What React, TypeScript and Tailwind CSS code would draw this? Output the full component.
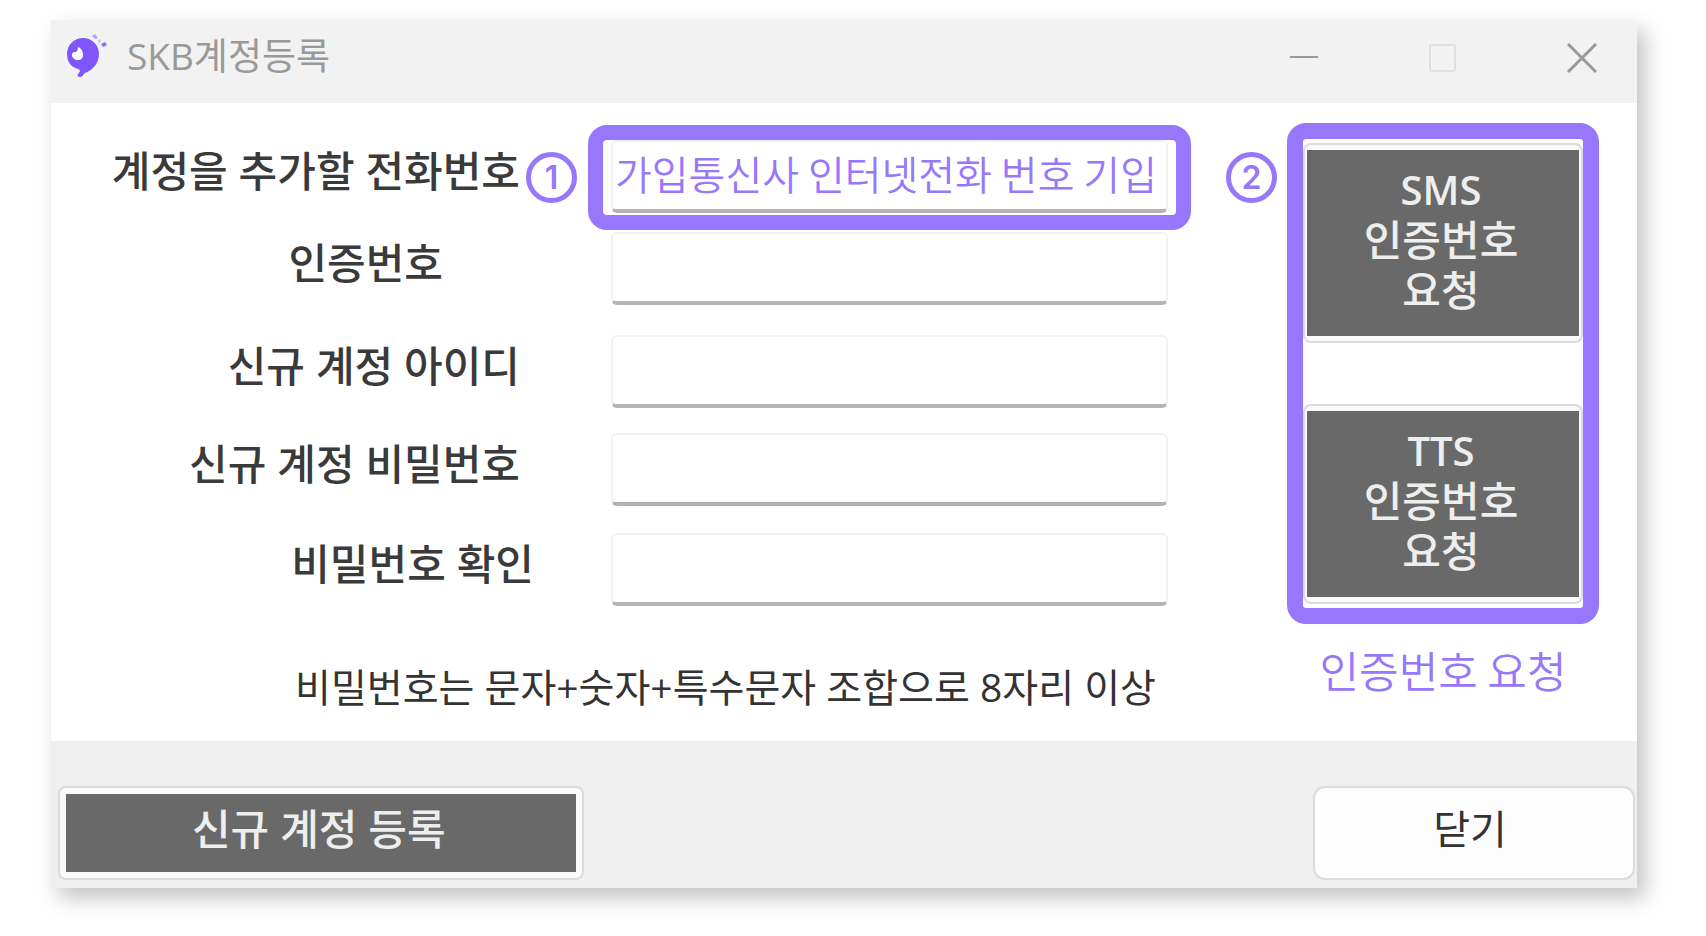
import type { ReactNode } from 'react';

const fields = [
  { id: 'phone', label: '계정을 추가할 전화번호', type: 'tel', row: '', labelPad: 'pr-[91px]' },
  { id: 'code', label: '인증번호', type: 'text', row: 'mt-[19px]', labelPad: 'pr-[168px]' },
  { id: 'account', label: '신규 계정 아이디', type: 'text', row: 'mt-[30px]', labelPad: 'pr-[91px]' },
  { id: 'password', label: '신규 계정 비밀번호', type: 'password', row: 'mt-[25px]', labelPad: 'pr-[91px]' },
  { id: 'confirm', label: '비밀번호 확인', type: 'password', row: 'mt-[27px]', labelPad: 'pr-[77px]' },
];

const Logo = () => (
  <svg viewBox="0 0 40 44" className="mb-3 h-11 w-10" aria-hidden="true">
    <path
      d="M16 4C7 4 0 11 0 20c0 8 4 13 11 15 2 1 3 2 0 5-1 1 0 3 2 3 3 0 3-3 5-4 8-3 14-10 14-19C32 11 25 4 16 4z"
      fill="#7f56fb"
    />
    <path d="M11 13c3 1 5 4 5 8 0 3-2 5-5 5s-6-2-6-5c0-2 1-3 3-3 2 0 3-2 3-5z" fill="#fff" />
    <path d="M25 2l3-2 3 4-3 1z" fill="#b9a4fb" />
    <path d="M31 6l3-1-1 4-2 0z" fill="#cfc2fb" />
    <path d="M34 10l4-2 2 3-4 2z" fill="#8f6cfb" />
  </svg>
);

const StepBadge = ({ children }: { children: ReactNode }) => (
  <span className="flex h-[51px] w-[51px] shrink-0 items-center justify-center rounded-full border-5 border-[#9777fb] bg-white font-['Inter',sans-serif] text-[32px] leading-none font-semibold text-[#9777fb]">
    {children}
  </span>
);

const DarkButton = ({ className = '', children }: { className?: string; children: ReactNode }) => (
  <button
    type="button"
    className={`block rounded-lg border-2 border-[#dcdcdc] bg-[#fafafa] text-[42px] leading-[50px] font-medium text-[#eeeeee] ${className}`}
  >
    {children}
  </button>
);

const RequestButton = ({ method }: { method: string }) => (
  <DarkButton className="h-[200px] w-full px-0.5 py-[5px]">
    <span className="flex h-full flex-col items-center justify-center bg-[#696969] pr-1 pb-1.5">
      <span className="text-[40px] font-semibold">{method}</span>
      <span>인증번호</span>
      <span>요청</span>
    </span>
  </DarkButton>
);

const TitleBar = () => (
  <header className="flex h-[83px] items-center bg-[#f2f2f2] pr-10 pl-4">
    <Logo />
    <h1 className="ml-5 pb-3 text-[37px] leading-[50px] whitespace-nowrap text-[#999999]">SKB계정등록</h1>
    <div className="ml-auto flex gap-[109px] pb-2">
      <button type="button" aria-label="최소화" className="h-[30px] w-[30px]">
        <svg viewBox="0 0 30 30" fill="none" stroke="#999" strokeWidth="2">
          <path d="M1 14h28" />
        </svg>
      </button>
      <button type="button" aria-label="최대화" disabled className="h-[30px] w-[30px]">
        <svg viewBox="0 0 30 30" fill="none" stroke="#e0e0e0" strokeWidth="2">
          <rect x="2" y="2" width="25" height="26" rx="2" />
        </svg>
      </button>
      <button type="button" aria-label="닫기" className="h-[30px] w-[30px]">
        <svg viewBox="0 0 30 30" fill="none" stroke="#999" strokeWidth="3">
          <path d="M1 1l28 28M29 1L1 29" />
        </svg>
      </button>
    </div>
  </header>
);

const App = () => {
  return (
    <div className="bg-white pt-5 pr-[69px] pb-12 pl-[51px] font-['Open_Sans','Noto_Sans_CJK_KR',sans-serif]">
      <main className="bg-white shadow-[8px_10px_20px_rgba(0,0,0,0.24)]">
        <TitleBar />

        <div className="grid grid-cols-[minmax(0,1117fr)_minmax(0,469fr)]">
          <form className="pt-[37px] pb-[29px]">
            {fields.map((field) => (
              <div
                key={field.id}
                className={`grid grid-cols-[minmax(0,560fr)_minmax(0,557fr)] items-center ${field.row}`}
              >
                <label
                  htmlFor={field.id}
                  className={`flex justify-end pb-3 text-[42px] leading-[50px] font-medium whitespace-nowrap text-[#3a3a3a] ${field.labelPad}`}
                >
                  {field.label}
                </label>
                <div className="relative">
                  <input
                    id={field.id}
                    type={field.type}
                    placeholder={field.id === 'phone' ? '가입통신사 인터넷전화 번호 기입' : undefined}
                    className="block h-[73px] w-full rounded-md border-2 border-b-4 border-[#f2f2f2] border-b-[#b4b4b4] bg-white px-0.5 pb-1.5 font-['Noto_Sans_CJK_KR',sans-serif] text-[40px] font-[350] text-[#333333] outline-none placeholder:text-[#9777fb] placeholder:opacity-100"
                  />
                  {field.id === 'phone' && (
                    <>
                      <div className="pointer-events-none absolute -inset-x-[23px] -top-[15px] -bottom-[17px] rounded-[19px] border-[15px] border-[#9777fb]" />
                      <div className="absolute top-3 -left-[85px]">
                        <StepBadge>1</StepBadge>
                      </div>
                    </>
                  )}
                </div>
              </div>
            ))}
            <p className="mt-14 pl-[244px] text-[39px] leading-[50px] whitespace-nowrap text-[#333333]">
              비밀번호는 문자+숫자+특수문자 조합으로 8자리 이상
            </p>
          </form>

          <aside className="flex items-start pt-5 pr-[38px] pl-[58px]">
            <div className="mt-[29px] mr-[10px]">
              <StepBadge>2</StepBadge>
            </div>
            <div className="min-w-0 flex-1">
              <div className="flex flex-col gap-[61px] rounded-[19px] border-16 border-[#9777fb] py-1">
                <RequestButton method="SMS" />
                <RequestButton method="TTS" />
              </div>
              <p className="mt-5 text-center font-['Noto_Sans_CJK_KR',sans-serif] text-[43px] leading-[50px] font-[350] whitespace-nowrap text-[#9777fb]">
                인증번호 요청
              </p>
            </div>
          </aside>
        </div>

        <footer className="flex justify-between bg-[#efefef] pt-[45px] pr-0.5 pb-2 pl-[7px]">
          <DarkButton className="h-[94px] w-1/3 p-1.5">
            <span className="flex h-full items-center justify-center bg-[#696969] pr-1 pb-2">신규 계정 등록</span>
          </DarkButton>
          <button
            type="button"
            className="h-[94px] w-[322px] rounded-xl border-2 border-[#dcdcdc] bg-[#fdfdfd] pr-2 pb-2 text-[40px] leading-[50px] text-[#333333]"
          >
            닫기
          </button>
        </footer>
      </main>
    </div>
  );
};

export default App;
